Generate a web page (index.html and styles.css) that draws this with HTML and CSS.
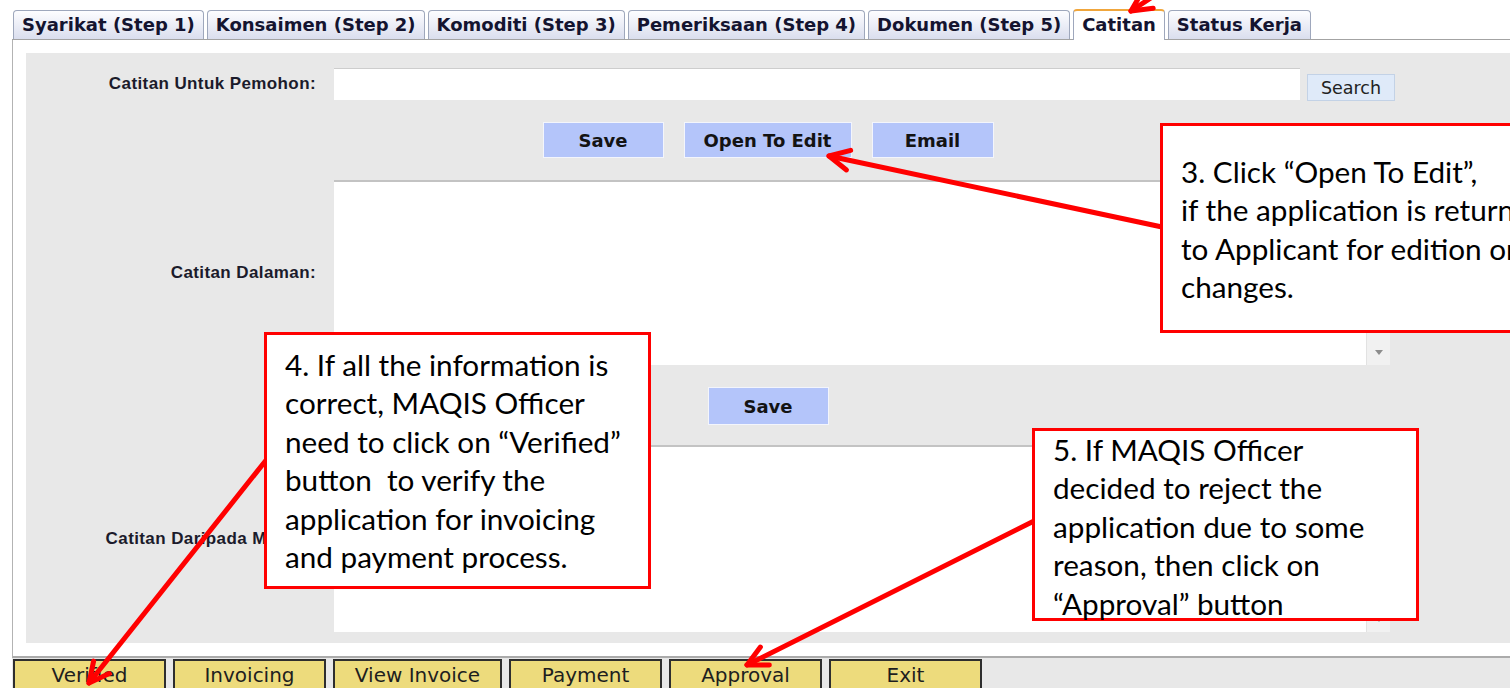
FILE: index.html
```html
<!DOCTYPE html>
<html lang="ms">
<head>
<meta charset="utf-8">
<title>Catitan</title>
<link rel="stylesheet" href="styles.css">
</head>
<body>
<div class="page">
  <nav class="tabs">
    <span class="tab">Syarikat (Step 1)</span>
    <span class="tab">Konsaimen (Step 2)</span>
    <span class="tab">Komoditi (Step 3)</span>
    <span class="tab">Pemeriksaan (Step 4)</span>
    <span class="tab">Dokumen (Step 5)</span>
    <span class="tab active">Catitan</span>
    <span class="tab">Status Kerja</span>
  </nav>

  <section class="frame">
    <div class="panel">
      <div class="row">
        <label class="lbl">Catitan Untuk Pemohon:</label>
        <div class="search-field">
          <input class="text-input" type="text">
          <button class="btn-search" type="button">Search</button>
        </div>
      </div>

      <div class="actions">
        <button class="btn-blue w-save" type="button">Save</button>
        <button class="btn-blue w-open" type="button">Open To Edit</button>
        <button class="btn-blue w-email" type="button">Email</button>
      </div>

      <div class="row row-mid">
        <label class="lbl">Catitan Dalaman:</label>
        <div class="area area-a">
          <div class="area-body"></div>
          <div class="scroll"><span class="scroll-arrow"></span></div>
        </div>
      </div>

      <div class="actions">
        <button class="btn-blue w-save tall" type="button">Save</button>
      </div>

      <div class="row row-last">
        <label class="lbl">Catitan Daripada MAQIS:</label>
        <div class="area area-b">
          <div class="area-body"></div>
          <div class="scroll"><span class="scroll-arrow"></span></div>
        </div>
      </div>
    </div>
  </section>

  <footer class="toolbar">
    <button class="tb-btn" type="button">Verified</button>
    <button class="tb-btn" type="button">Invoicing</button>
    <button class="tb-btn wide" type="button">View Invoice</button>
    <button class="tb-btn" type="button">Payment</button>
    <button class="tb-btn" type="button">Approval</button>
    <button class="tb-btn" type="button">Exit</button>
  </footer>
</div>

<!-- callout arrows -->
<svg class="arrows" width="1510" height="688" viewBox="0 0 1510 688">
  <defs>
    <marker id="tip" viewBox="0 0 28 28" refX="3" refY="14" markerWidth="28" markerHeight="28" orient="auto" markerUnits="userSpaceOnUse">
      <path d="M23 4 L3 14 L23 24" fill="none" stroke="#ff0000" stroke-width="5" stroke-linecap="round" stroke-linejoin="round"/>
    </marker>
  </defs>
  <line x1="1131" y1="11" x2="1178" y2="-20" marker-start="url(#tip)"/>
  <line x1="829" y1="156" x2="1162" y2="227" marker-start="url(#tip)"/>
  <line x1="89" y1="683" x2="267" y2="459" marker-start="url(#tip)"/>
  <line x1="747" y1="665" x2="1034" y2="521" marker-start="url(#tip)"/>
</svg>

<div class="note note-3">3. Click “Open To Edit”,<br>if the application is returned<br>to Applicant for edition or<br>changes.</div>
<div class="note note-4">4. If all the information is<br>correct, MAQIS Officer<br>need to click on “Verified”<br>button&nbsp; to verify the<br>application for invoicing<br>and payment process.</div>
<div class="note note-5">5. If MAQIS Officer<br>decided to reject the<br>application due to some<br>reason, then click on<br>“Approval” button</div>
</body>
</html>
```

FILE: styles.css
```css
* { box-sizing: border-box; }

html, body {
  margin: 0;
  padding: 0;
  overflow: hidden;
  background: #fff;
}

body {
  position: relative;
  width: 1510px;
  height: 688px;
  font-family: "DejaVu Sans", Verdana, sans-serif;
  color: #151520;
}

.page {
  padding: 9px 0 0 12px;
}

/* ---- tab strip ---- */
.tabs {
  display: flex;
  align-items: flex-end;
  gap: 3px;
  height: 31px;
  padding-left: 1px;
  border-bottom: 1px solid #a3a3a3;
}

.tab {
  height: 29px;
  padding: 0 8px;
  border: 1px solid #9ea7bc;
  border-bottom: none;
  border-radius: 4px 4px 0 0;
  background: linear-gradient(#fdfdff, #dadeee);
  font-weight: bold;
  font-size: 18px;
  line-height: 27px;
  color: #141430;
  white-space: nowrap;
}

.tab.active {
  height: 31px;
  margin-bottom: -1px;
  border-top: 2px solid #f0a63c;
  background: #fff;
  line-height: 28px;
}

/* ---- main frame ---- */
.frame {
  border-left: 1px solid #b3b3b3;
  border-bottom: 2px solid #ababab;
  padding: 13px 0 13px 13px;
}

.panel {
  background: #e8e8e8;
  padding: 15px 0 11px;
}

.row {
  display: grid;
  grid-template-columns: 290px 1056px;
  column-gap: 18px;
  align-items: center;
}

.row-mid { margin-top: 22px; }
.row-last { margin-top: 20px; }

.lbl {
  text-align: right;
  font-family: "Liberation Sans", Arial, sans-serif;
  font-weight: bold;
  font-size: 17px;
  letter-spacing: 0.4px;
  color: #1b1b2b;
  white-space: nowrap;
}

.search-field {
  display: flex;
  align-items: flex-end;
}

.text-input {
  flex: none;
  width: 966px;
  height: 32px;
  margin: 0;
  padding: 0 4px;
  border: none;
  border-top: 1px solid #cdcdcd;
  background: #fff;
}

.btn-search {
  flex: none;
  width: 88px;
  height: 27px;
  margin: 0 0 -1px 7px;
  padding: 0;
  border: 1px solid #c3d2e6;
  background: #dfeaf9;
  font-family: "DejaVu Sans", Verdana, sans-serif;
  font-size: 17.5px;
  color: #222;
}

.actions {
  display: flex;
  justify-content: center;
  gap: 20px;
  margin-top: 22px;
}

.btn-blue {
  height: 36px;
  padding: 0;
  border: 1px solid #f3f5fc;
  background: #b4c5fa;
  font-family: "DejaVu Sans", Verdana, sans-serif;
  font-weight: bold;
  font-size: 18px;
  color: #131313;
}

.btn-blue.tall { height: 38px; }
.w-save { width: 121px; }
.w-open { width: 168px; }
.w-email { width: 122px; }

.area {
  display: flex;
  background: #fff;
  border-top: 2px solid #c3c3c3;
}

.area-a { height: 185px; }
.area-b { height: 187px; }

.area-body { flex: 1; }

.scroll {
  width: 24px;
  display: flex;
  flex-direction: column;
  justify-content: flex-end;
  align-items: center;
  padding-bottom: 10px;
  background: #f1f1f1;
  border-left: 1px solid #e2e2e2;
}

.scroll-arrow {
  width: 0;
  height: 0;
  border-left: 4px solid transparent;
  border-right: 4px solid transparent;
  border-top: 5px solid #8d8d8d;
}

/* ---- bottom toolbar ---- */
.toolbar {
  display: flex;
  gap: 7px;
  height: 30px;
  padding: 1px 0 0 1px;
  background: #e8e8e8;
}

.tb-btn {
  flex: none;
  width: 153px;
  height: 34px;
  padding: 0 0 3px;
  border: 2px solid #2e2e2e;
  background: #eddb7c;
  font-family: "DejaVu Sans", Verdana, sans-serif;
  font-size: 20px;
  color: #1e1e1e;
}

.tb-btn.wide { width: 169px; }

/* ---- callouts ---- */
.arrows {
  position: absolute;
  left: 0;
  top: 0;
  z-index: 1;
  pointer-events: none;
}

.arrows line {
  stroke: #ff0000;
  stroke-width: 5;
  stroke-linecap: round;
}

.note {
  position: absolute;
  z-index: 2;
  background: #fff;
  border: 3px solid #ff0000;
  padding-left: 18px;
  font-family: Lato, "Open Sans", sans-serif;
  font-size: 29.7px;
  line-height: 38.4px;
  color: #000;
  white-space: nowrap;
}

.note-3 {
  left: 1160px;
  top: 123px;
  width: 420px;
  height: 210px;
  padding-top: 27px;
}

.note-4 {
  left: 264px;
  top: 332px;
  width: 387px;
  height: 257px;
  padding-top: 11px;
}

.note-5 {
  left: 1032px;
  top: 428px;
  width: 387px;
  height: 193px;
  padding-top: 0;
}
```
